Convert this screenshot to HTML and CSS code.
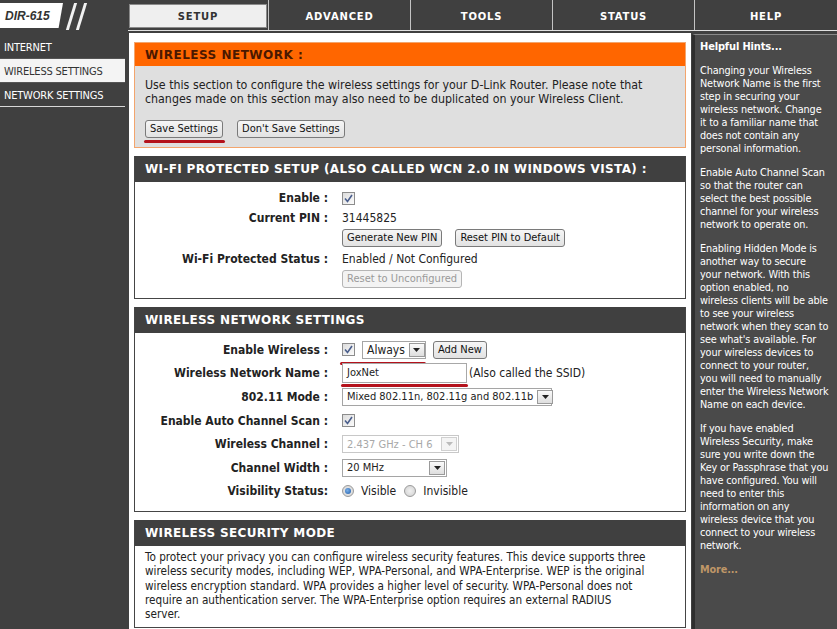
FILE: index.html
```html
<!DOCTYPE html>
<html>
<head>
<meta charset="utf-8">
<title>DIR-615 Wireless Settings</title>
<link rel="stylesheet" href="styles.css">
</head>
<body>
<div class="page">
  <header class="topbar">
    <div class="logo">
      <span class="logo-box">DIR-615</span>
      <span class="slash"></span>
      <span class="slash"></span>
    </div>
    <nav class="tabs">
      <div class="tab active"><span class="tab-inner">SETUP</span></div>
      <div class="tab">ADVANCED</div>
      <div class="tab">TOOLS</div>
      <div class="tab">STATUS</div>
      <div class="tab">HELP</div>
    </nav>
  </header>

  <div class="layout">
    <aside class="side">
      <div class="side-item">INTERNET</div>
      <div class="side-item current">WIRELESS SETTINGS</div>
      <div class="side-item">NETWORK SETTINGS</div>
    </aside>

    <main class="main">
      <section class="intro">
        <h2 class="intro-head">WIRELESS NETWORK :</h2>
        <div class="intro-body">
          <p>Use this section to configure the wireless settings for your D-Link Router. Please note that changes made on this section may also need to be duplicated on your Wireless Client.</p>
          <div class="actions">
            <span class="mark mark-save"><button class="btn">Save Settings</button></span>
            <button class="btn">Don't Save Settings</button>
          </div>
        </div>
      </section>

      <section class="box">
        <h2 class="box-head">WI-FI PROTECTED SETUP (ALSO CALLED WCN 2.0 IN WINDOWS VISTA) :</h2>
        <div class="form form-wps">
          <label class="lbl">Enable :</label>
          <div class="val"><span class="check"><svg viewBox="0 0 13 13" width="13" height="13"><path d="M3 6.5 L5.5 9.5 L10 3" fill="none" stroke="#4a5e8c" stroke-width="1.6"/></svg></span></div>
          <label class="lbl">Current PIN :</label>
          <div class="val">31445825</div>
          <div class="lbl"></div>
          <div class="val"><button class="btn">Generate New PIN</button><button class="btn">Reset PIN to Default</button></div>
          <label class="lbl">Wi-Fi Protected Status :</label>
          <div class="val">Enabled / Not Configured</div>
          <div class="lbl"></div>
          <div class="val"><button class="btn disabled">Reset to Unconfigured</button></div>
        </div>
      </section>

      <section class="box">
        <h2 class="box-head">WIRELESS NETWORK SETTINGS</h2>
        <div class="form form-wns">
          <label class="lbl">Enable Wireless :</label>
          <div class="val">
            <span class="check"><svg viewBox="0 0 13 13" width="13" height="13"><path d="M3 6.5 L5.5 9.5 L10 3" fill="none" stroke="#4a5e8c" stroke-width="1.6"/></svg></span>
            <span class="mark mark-always"><span class="select sel-always"><span class="sel-text">Always</span><span class="sel-btn"><svg viewBox="0 0 7 4" width="7" height="4"><path d="M0 0 H7 L3.5 4 Z" fill="#222"/></svg></span></span></span>
            <button class="btn">Add New</button>
          </div>
          <label class="lbl">Wireless Network Name :</label>
          <div class="val"><span class="mark mark-name"><span class="textbox">JoxNet</span></span><span class="note">(Also called the SSID)</span></div>
          <label class="lbl">802.11 Mode :</label>
          <div class="val"><span class="select sel-mode"><span class="sel-text">Mixed 802.11n, 802.11g and 802.11b</span><span class="sel-btn"><svg viewBox="0 0 7 4" width="7" height="4"><path d="M0 0 H7 L3.5 4 Z" fill="#222"/></svg></span></span></div>
          <label class="lbl">Enable Auto Channel Scan :</label>
          <div class="val"><span class="check"><svg viewBox="0 0 13 13" width="13" height="13"><path d="M3 6.5 L5.5 9.5 L10 3" fill="none" stroke="#4a5e8c" stroke-width="1.6"/></svg></span></div>
          <label class="lbl">Wireless Channel :</label>
          <div class="val"><span class="select sel-channel disabled"><span class="sel-text">2.437 GHz - CH 6</span><span class="sel-btn"><svg viewBox="0 0 7 4" width="7" height="4"><path d="M0 0 H7 L3.5 4 Z" fill="#bbb"/></svg></span></span></div>
          <label class="lbl">Channel Width :</label>
          <div class="val"><span class="select sel-width"><span class="sel-text">20 MHz</span><span class="sel-btn"><svg viewBox="0 0 7 4" width="7" height="4"><path d="M0 0 H7 L3.5 4 Z" fill="#222"/></svg></span></span></div>
          <label class="lbl">Visibility Status:</label>
          <div class="val radios">
            <span class="radio on"></span><span class="rlabel">Visible</span>
            <span class="radio"></span><span class="rlabel">Invisible</span>
          </div>
        </div>
      </section>

      <section class="box last">
        <h2 class="box-head">WIRELESS SECURITY MODE</h2>
        <p class="box-text">To protect your privacy you can configure wireless security features. This device supports three wireless security modes, including WEP, WPA-Personal, and WPA-Enterprise. WEP is the original wireless encryption standard. WPA provides a higher level of security. WPA-Personal does not require an authentication server. The WPA-Enterprise option requires an external RADIUS server.</p>
      </section>
    </main>

    <aside class="hints">
      <h3 class="hints-head">Helpful Hints...</h3>
      <p>Changing your Wireless Network Name is the first step in securing your wireless network. Change it to a familiar name that does not contain any personal information.</p>
      <p>Enable Auto Channel Scan so that the router can select the best possible channel for your wireless network to operate on.</p>
      <p>Enabling Hidden Mode is another way to secure your network. With this option enabled, no wireless clients will be able to see your wireless network when they scan to see what's available. For your wireless devices to connect to your router, you will need to manually enter the Wireless Network Name on each device.</p>
      <p>If you have enabled Wireless Security, make sure you write down the Key or Passphrase that you have configured. You will need to enter this information on any wireless device that you connect to your wireless network.</p>
      <p class="more">More...</p>
    </aside>
  </div>
</div>
</body>
</html>
```

FILE: styles.css
```css
* { box-sizing: border-box; }

html, body {
  margin: 0;
  padding: 0;
  background: #404040;
  font-family: "DejaVu Sans Condensed", "DejaVu Sans", sans-serif;
  font-stretch: condensed;
  color: #222;
  overflow: hidden;
}

.page {
  width: 837px;
  height: 629px;
  overflow: hidden;
}

/* ---------- top bar ---------- */
.topbar {
  display: flex;
  height: 33px;
  border-bottom: 2px solid #404040;
}

.logo {
  width: 128px;
  display: flex;
  align-items: flex-start;
  padding-top: 3px;
}

.logo-box {
  display: block;
  width: 63px;
  height: 25px;
  background: #fff;
  clip-path: polygon(0 0, 100% 0, 93% 100%, 0 100%);
  font: italic bold 12px/26px "Liberation Sans", Arial, sans-serif;
  font-stretch: normal;
  color: #333;
  padding-left: 5px;
}

.slash {
  display: block;
  width: 3px;
  height: 27px;
  background: #f2f2f2;
  transform: skewX(-17deg);
  margin-left: 7px;
}
.slash + .slash { margin-left: 7px; }

.tabs {
  flex: 1;
  display: flex;
  height: 31px;
  border-bottom: 1px solid #e0e0e0;
}

.tab {
  width: 142px;
  border-left: 1px solid #c4c4c4;
  color: #fff;
  font: bold 10px/30px "DejaVu Sans", Verdana, sans-serif;
  font-stretch: normal;
  padding-top: 2px;
  letter-spacing: 0.8px;
  text-align: center;
}
.tab:first-child { width: 140px; border-left: none; padding: 4px 1px 2px 1px; }
.tab:last-child { flex: 1; }

.tab-inner {
  display: block;
  height: 24px;
  background: #efefef;
  color: #333;
  border: 1px solid #8a8a8a;
  line-height: 23px;
}

/* ---------- layout ---------- */
.layout {
  display: flex;
  height: 596px;
}

.side {
  width: 128px;
  padding-top: 2px;
}

.side-item {
  height: 24px;
  line-height: 25px;
  padding-left: 4px;
  font-size: 11px;
  letter-spacing: -0.2px;
  color: #fff;
  border-bottom: 1px solid #d8d8d8;
  width: 125px;
}
.side-item:first-child { border-bottom-color: #555; }
.side-item.current {
  background: #f4f4f4;
  color: #333;
  border-bottom-color: #555;
}

.main {
  width: 562px;
  background: #fff;
  padding: 9px 5px 0 5px;
  margin-left: 1px;
}

.hints {
  width: 145px;
  margin-left: 1px;
  padding: 5px 8px 0 5px;
  border-top: 1px solid #8a8a8a;
  margin-top: 1px;
  border-left: 3px solid #2e2e2e;
  background: #4a4a4a;
  color: #fff;
  font-size: 10.8px;
  line-height: 13px;
  letter-spacing: -0.15px;
}

.hints-head {
  margin: 0 0 11px 0;
  font-size: 11px;
  font-weight: bold;
}
.hints p { margin: 0 0 11px 0; }
.hints .more {
  color: #bf9667;
  font-weight: bold;
  margin-top: 3px;
}

/* ---------- intro box ---------- */
.intro {
  border: 1px solid #f3a56d;
  background: #dfdfdf;
  margin-bottom: 8px;
}
.intro-head {
  margin: 0;
  height: 23px;
  background: #ff6600;
  color: #4a1800;
  font: bold 12px/24px "DejaVu Sans", Verdana, sans-serif;
  font-stretch: normal;
  letter-spacing: 0.5px;
  padding-left: 10px;
}
.intro-body {
  padding: 12px 34px 9px 10px;
  font-size: 12.3px;
  line-height: 14px;
}
.intro-body p { margin: 0 0 14px 0; }
.actions { display: flex; gap: 14px; }

/* ---------- section boxes ---------- */
.box {
  border: 1px solid #454545;
  border-top: none;
  margin-bottom: 8px;
  background: #fff;
}
.box-head {
  margin: 0;
  height: 26px;
  background: #404040;
  color: #fff;
  font: bold 12px/26px "DejaVu Sans", Verdana, sans-serif;
  font-stretch: normal;
  letter-spacing: 0.35px;
  padding-left: 10px;
}

.form {
  display: grid;
  grid-template-columns: 193px 1fr;
  column-gap: 14px;
}
.form-wps { grid-auto-rows: 20.2px; padding: 6px 0 9px 0; }
.form-wns { grid-auto-rows: 23.6px; padding: 5px 0 8px 0; }

.lbl {
  text-align: right;
  font-weight: bold;
  font-size: 12px;
  color: #222;
  display: flex;
  align-items: center;
  justify-content: flex-end;
}
.val {
  display: flex;
  align-items: center;
  gap: 7px;
  font-size: 12px;
}

.box-text {
  margin: 0;
  padding: 4px 36px 6px 10px;
  font-size: 11.65px;
  line-height: 14.2px;
}

/* ---------- controls ---------- */
.btn {
  font-family: inherit;
  font-stretch: condensed;
  font-size: 11px;
  color: #111;
  height: 18px;
  padding: 0 4px;
  border: 1px solid #7a7a7a;
  border-radius: 3px;
  background: linear-gradient(#f6f6f6, #e2e2e2);
  line-height: 16px;
}
.btn.disabled { color: #9a9a9a; border-color: #b5b5b5; background: #f3f3f3; }
.form-wps .val .btn + .btn { margin-left: 6px; }

.check {
  display: inline-block;
  width: 13px;
  height: 13px;
  border: 1px solid #8c8c8c;
  background: linear-gradient(135deg, #dcdcdc, #fbfbfb);
  position: relative;
}
.check svg { position: absolute; left: -1px; top: -1px; }

.select {
  display: inline-flex;
  align-items: center;
  height: 18px;
  border: 1px solid #a5a5a5;
  background: #fff;
  font-size: 11px;
  padding-left: 4px;
  justify-content: space-between;
  white-space: nowrap;
}
.sel-btn {
  width: 16px;
  height: 14px;
  margin-right: 1px;
  border: 1px solid #9a9a9a;
  background: linear-gradient(#fafafa, #dedede);
  display: flex;
  align-items: center;
  justify-content: center;
  margin-left: 4px;
  flex: none;
}
.sel-always { width: 64px; font-size: 12px; }
.sel-mode { width: 210px; }
.sel-channel { width: 117px; }
.sel-width { width: 105px; }
.select.disabled { color: #a8a8a8; border-color: #c8c8c8; }
.select.disabled .sel-btn { border-color: #d0d0d0; background: #f4f4f4; }

.textbox {
  display: inline-block;
  width: 125px;
  height: 20px;
  border: 1px solid #a8a8a8;
  font-size: 11px;
  line-height: 18px;
  padding-left: 4px;
  background: #fff;
}
.note { font-size: 12px; margin-left: -5px; }

.radios { gap: 0; }
.radio {
  width: 12px;
  height: 12px;
  border-radius: 50%;
  border: 1px solid #9a9a9a;
  background: radial-gradient(circle, #f0f0f0, #d0d0d0);
  position: relative;
}
.radio.on::after {
  content: "";
  position: absolute;
  left: 2px; top: 2px;
  width: 6px; height: 6px;
  border-radius: 50%;
  background: radial-gradient(circle at 40% 40%, #7ab0e8, #1e5aa8);
}
.rlabel { font-size: 12px; margin: 0 8px 0 7px; }

/* red underline marks */
.mark { position: relative; display: inline-flex; }
.mark::after {
  content: "";
  position: absolute;
  height: 3px;
  background: #b4121c;
  border-radius: 2px;
  left: -1px;
}
.mark-save::after { right: -2px; bottom: -5px; }
.mark-always::after { left: -22px; right: 0; bottom: -6px; }
.mark-name::after { right: -1px; bottom: -4px; }
```
